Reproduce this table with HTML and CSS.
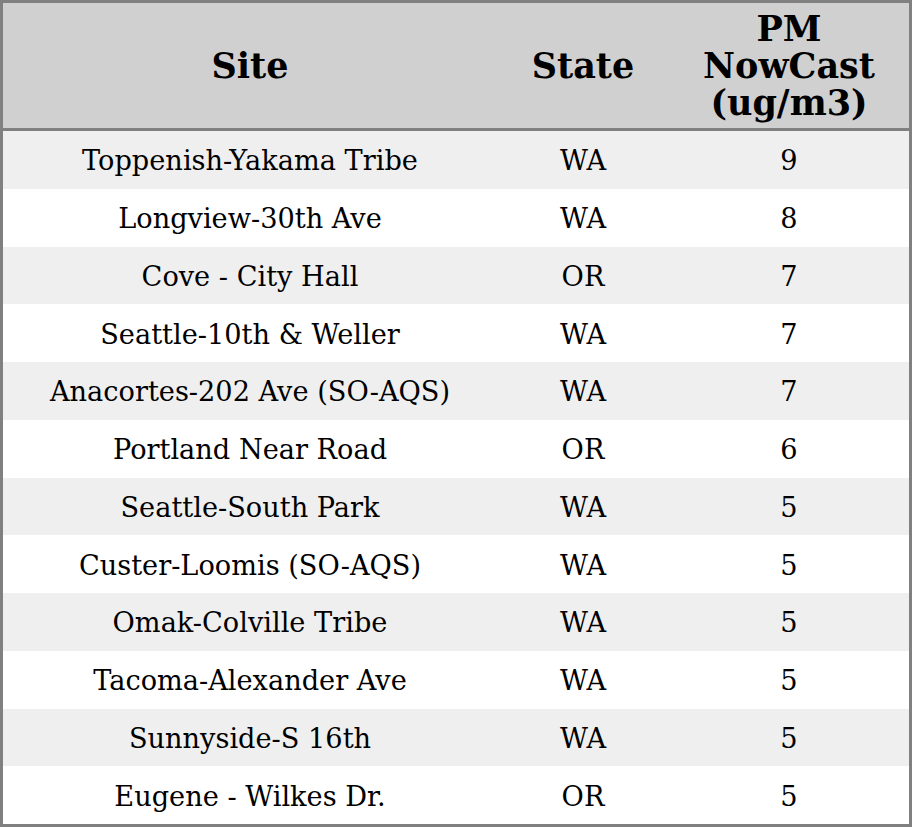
FILE: index.html
```html
<!DOCTYPE html>
<html>
<head>
<meta charset="utf-8">
<link rel="stylesheet" href="styles.css">
</head>
<body>
<div class="table">
  <div class="row head">
    <div class="cell">Site</div>
    <div class="cell">State</div>
    <div class="cell">PM<br>NowCast<br>(ug/m3)</div>
  </div>
  <div class="row odd"><div class="cell">Toppenish-Yakama Tribe</div><div class="cell">WA</div><div class="cell">9</div></div>
  <div class="row"><div class="cell">Longview-30th Ave</div><div class="cell">WA</div><div class="cell">8</div></div>
  <div class="row odd"><div class="cell">Cove - City Hall</div><div class="cell">OR</div><div class="cell">7</div></div>
  <div class="row"><div class="cell">Seattle-10th &amp; Weller</div><div class="cell">WA</div><div class="cell">7</div></div>
  <div class="row odd"><div class="cell">Anacortes-202 Ave (SO-AQS)</div><div class="cell">WA</div><div class="cell">7</div></div>
  <div class="row"><div class="cell">Portland Near Road</div><div class="cell">OR</div><div class="cell">6</div></div>
  <div class="row odd"><div class="cell">Seattle-South Park</div><div class="cell">WA</div><div class="cell">5</div></div>
  <div class="row"><div class="cell">Custer-Loomis (SO-AQS)</div><div class="cell">WA</div><div class="cell">5</div></div>
  <div class="row odd"><div class="cell">Omak-Colville Tribe</div><div class="cell">WA</div><div class="cell">5</div></div>
  <div class="row"><div class="cell">Tacoma-Alexander Ave</div><div class="cell">WA</div><div class="cell">5</div></div>
  <div class="row odd"><div class="cell">Sunnyside-S 16th</div><div class="cell">WA</div><div class="cell">5</div></div>
  <div class="row"><div class="cell">Eugene - Wilkes Dr.</div><div class="cell">OR</div><div class="cell">5</div></div>
</div>
</body>
</html>
```
FILE: styles.css
```css
html, body {
  margin: 0;
  padding: 0;
  background: #ffffff;
}
.table {
  box-sizing: border-box;
  width: 912px;
  height: 827px;
  border: 3px solid #808080;
  display: flex;
  flex-direction: column;
  font-family: "DejaVu Serif", serif;
  color: #000;
}
.row {
  display: grid;
  grid-template-columns: 494px 172px 240px;
  flex: 1 1 0;
  background: #ffffff;
  font-size: 27.2px;
}
.row.odd {
  background: #efefef;
}
.row .cell {
  padding-top: 2px;
}
.row.head {
  flex: 0 0 125px;
  background: #d0d0d0;
  border-bottom: 3px solid #808080;
  font-weight: bold;
  font-size: 35px;
  line-height: 37px;
}
.row.head .cell {
  padding-top: 0;
}
.cell {
  display: flex;
  align-items: center;
  justify-content: center;
  text-align: center;
}
```
